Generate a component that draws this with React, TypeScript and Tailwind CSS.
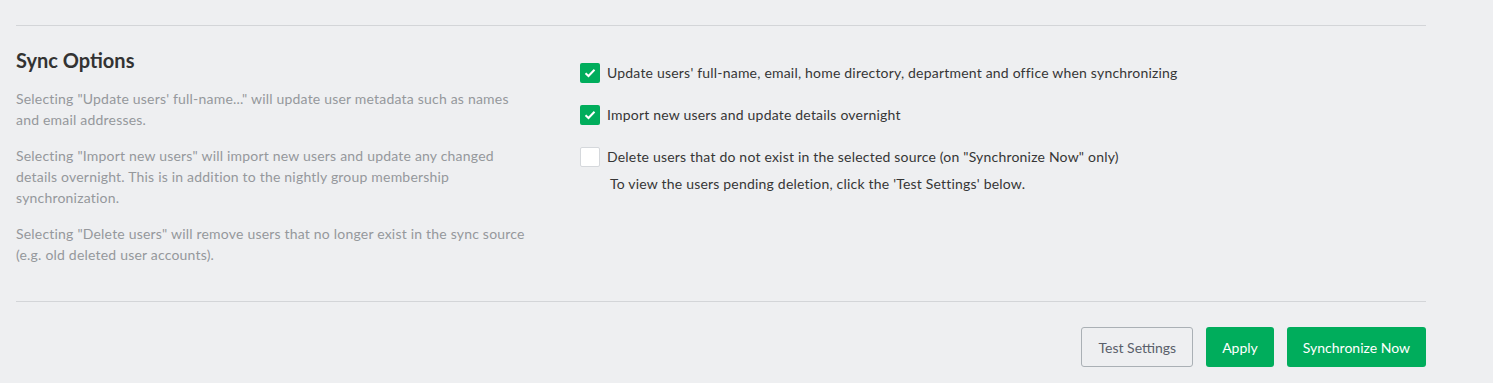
import React from "react";

const font = { fontFamily: '"Lato", "Noto Sans", sans-serif' };

interface OptionProps {
  label: string;
  checked: boolean;
}

const CheckOption: React.FC<OptionProps> = ({ label, checked }) => (
  <label className="flex items-center gap-[7px] h-[21px] text-[14px] tracking-[0.2px] text-[#363636]">
    {checked ? (
      <span className="w-[20px] h-[20px] rounded-[2px] bg-[#00ad5c] flex items-center justify-center">
        <svg width="12" height="10" viewBox="0 0 12 10" fill="none">
          <path d="M1.5 5.2 L4.5 8 L10.5 1.8" stroke="#fff" strokeWidth="2" />
        </svg>
      </span>
    ) : (
      <span className="w-[20px] h-[20px] rounded-[2px] bg-white border border-[#d5d8dc]" />
    )}
    <span>{label}</span>
  </label>
);

export default function App() {
  return (
    <div className="w-full h-[383px] bg-[#eeeff1] px-4" style={font}>
      <div className="w-[1410px]">
        <div className="pt-[25px] border-b border-[#d3d5d8]" />
        <section className="grid grid-cols-[564px_1fr] pt-[20px] pb-[36px] border-b border-[#d3d5d8]">
          <div>
            <h2 className="text-[20px] leading-[28px] font-bold text-[#333]">Sync Options</h2>
            <div className="mt-[14px] w-[514px] text-[14px] tracking-[0.2px] leading-[21px] text-[#95989c] flex flex-col gap-[15px]">
              <p>
                Selecting "Update users' full-name..." will update user metadata such as names and
                email addresses.
              </p>
              <p>
                Selecting "Import new users" will import new users and update any changed details
                overnight. This is in addition to the nightly group membership synchronization.
              </p>
              <p>
                Selecting "Delete users" will remove users that no longer exist in the sync source
                (e.g. old deleted user accounts).
              </p>
            </div>
          </div>
          <div className="pt-[16px] flex flex-col gap-[21px]">
            <CheckOption
              checked
              label="Update users' full-name, email, home directory, department and office when synchronizing"
            />
            <CheckOption checked label="Import new users and update details overnight" />
            <div>
              <CheckOption
                checked={false}
                label={'Delete users that do not exist in the selected source (on "Synchronize Now" only)'}
              />
              <p className="mt-[6px] pl-[30px] text-[14px] tracking-[0.2px] leading-[21px] text-[#363636]">
                To view the users pending deletion, click the 'Test Settings' below.
              </p>
            </div>
          </div>
        </section>
        <div className="flex justify-end gap-[13px] pt-[25px]">
          <button className="h-[40px] px-4 rounded-[3px] border border-[#aab0b5] text-[14px] text-[#5a5f6b]">
            Test Settings
          </button>
          <button className="h-[40px] px-4 rounded-[3px] bg-[#00ad5c] text-[14px] text-white">
            Apply
          </button>
          <button className="h-[40px] px-4 rounded-[3px] bg-[#00ad5c] text-[14px] text-white">
            Synchronize Now
          </button>
        </div>
      </div>
    </div>
  );
}
